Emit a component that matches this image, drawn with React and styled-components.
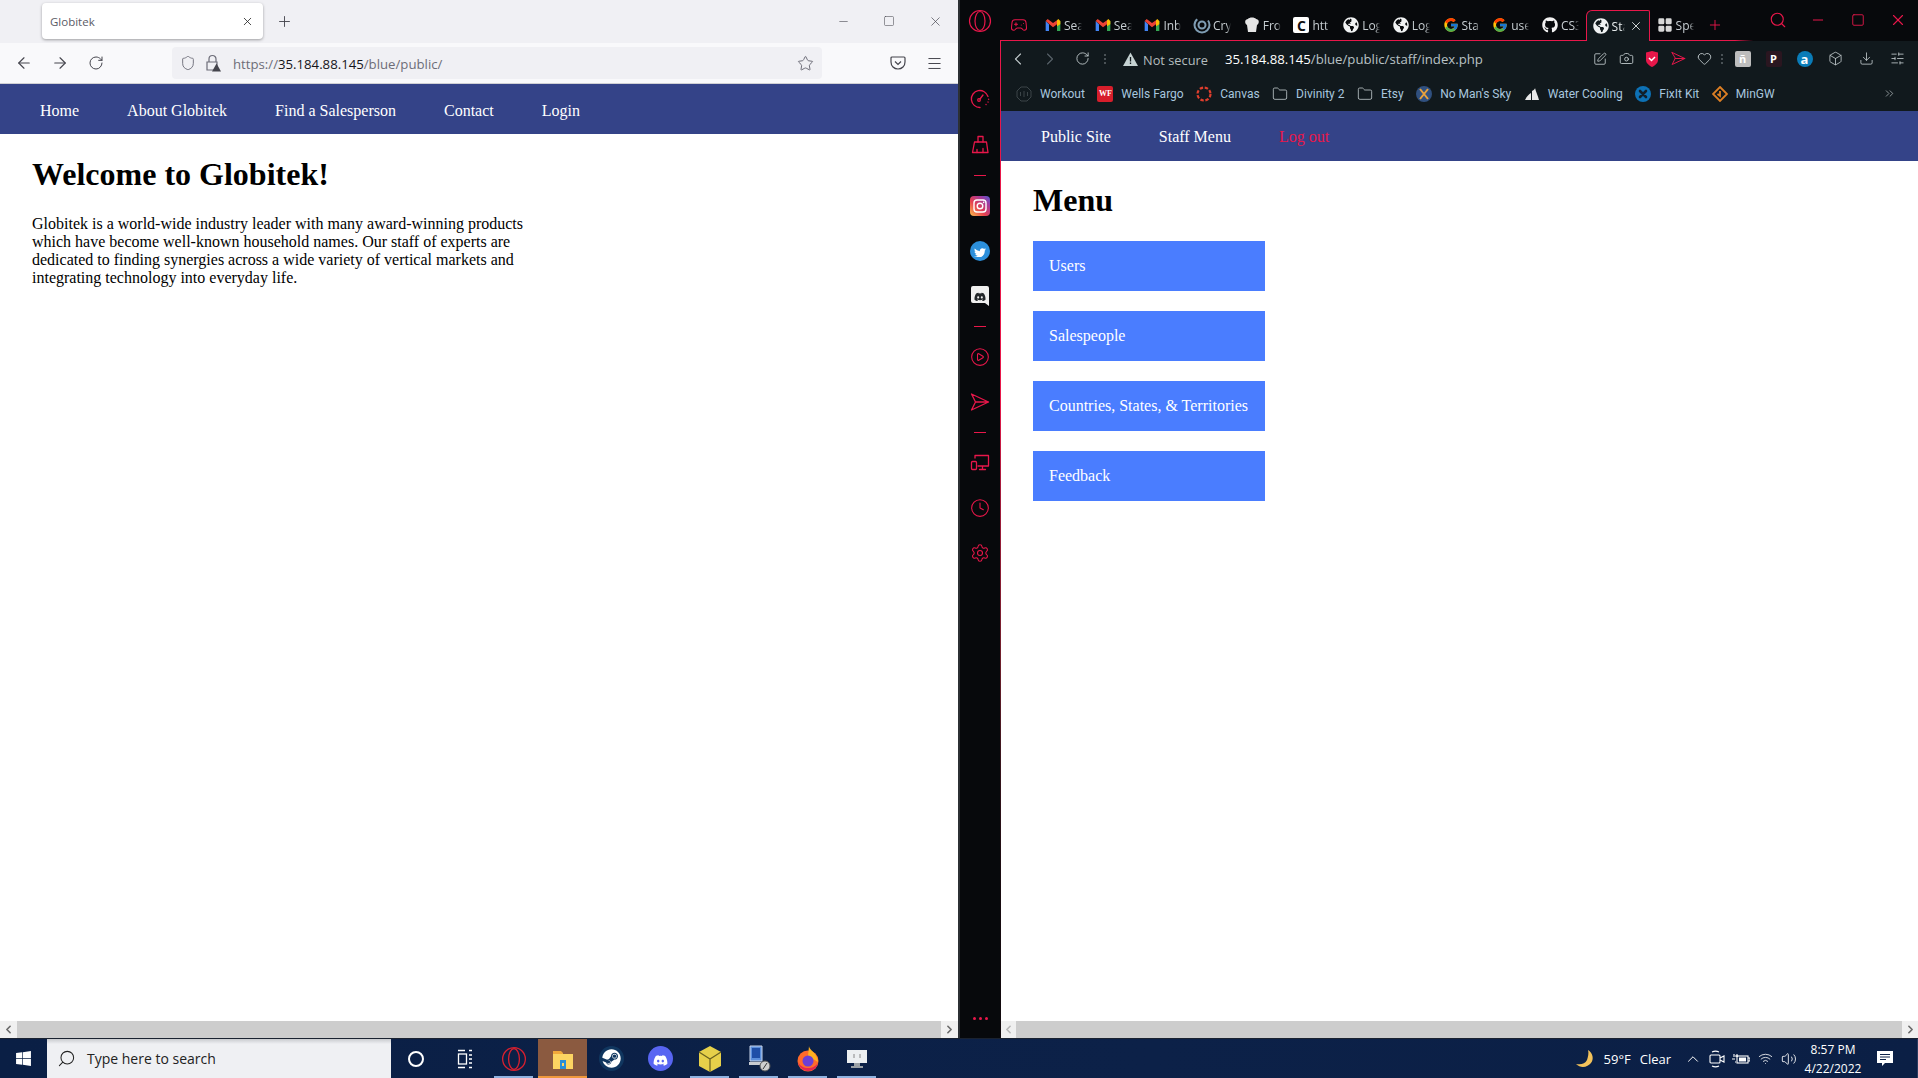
import React from "react";
import styled, { createGlobalStyle } from "styled-components";
import {
  ArrowLeft, ArrowRight, RotateCw, Shield, Star, Menu, X, Plus, Minus, Square, Search,
  CirclePlay, Clock, Settings, Gamepad2,
  ChevronLeft, ChevronRight, ChevronUp, ChevronsRight, Folder, SquarePen, Camera, Heart, Box,
  Download, SlidersHorizontal, Wifi, Volume2, LayoutGrid,
} from "lucide-react";
import { FaTwitter, FaDiscord, FaWindows, FaSteam, FaGithub, FaGlobeAmericas } from "react-icons/fa";
import { FcGoogle } from "react-icons/fc";

const crimson = "#e8174a";
const navBlue = "#344388";
const serif = `"Liberation Serif", "Times New Roman", serif`;
const sans = `"Open Sans", "Noto Sans", sans-serif`;
const uiSans = `Roboto, "Open Sans", sans-serif`;

const GlobalStyle = createGlobalStyle`
  html, body { margin: 0; height: 100%; overflow: hidden; background: #fff; }
  * { box-sizing: border-box; }
`;

const Screen = styled.div`
  height: 100vh;
  display: flex;
  flex-direction: column;
  font-family: ${serif};
`;
const Windows = styled.div`
  flex: 1;
  display: flex;
  min-height: 0;
`;

/* left window (firefox) */
const LeftWindow = styled.div`
  width: 958px;
  display: flex;
  flex-direction: column;
`;
const FoxTabs = styled.div`
  height: 43px;
  background: #f0f0f4;
  display: flex;
  padding: 3px 0 4px 42px;
  flex: none;
`;
const FoxTab = styled.div`
  width: 221px;
  background: #fff;
  border-radius: 4px;
  box-shadow: 0 1px 3px rgba(0, 0, 0, 0.35);
  display: flex;
  align-items: center;
  justify-content: space-between;
  padding: 0 9px 0 8px;
  font: 11.5px ${sans};
  color: #5b5b66;
`;
const Slot = styled.span`
  width: ${(p) => p.$w || 36}px;
  flex: none;
  display: flex;
  align-items: center;
  justify-content: center;
  color: ${(p) => p.$c || "inherit"};
`;
const WinControls = styled.div`
  margin-left: auto;
  display: flex;
  color: #45454d;
`;
const FoxToolbar = styled.div`
  height: 41px;
  flex: none;
  background: #f9f9fb;
  border-bottom: 1px solid #d0d0d4;
  display: flex;
  align-items: center;
  padding: 0 6px;
  color: #45454d;
`;
const FoxAddress = styled.div`
  width: 650px;
  height: 32px;
  margin: 0 58px;
  background: #f0f0f4;
  border-radius: 4px;
  display: flex;
  align-items: center;
  padding: 0 4px;
  font: 13.2px ${sans};
  color: #6d6d78;
  b { font-weight: 400; color: #15141a; }
`;
const FoxUrl = styled.span`
  flex: 1;
  padding: 2px 0 0 7px;
`;
const NavBar = styled.nav`
  height: 50px;
  flex: none;
  background: ${navBlue};
  display: flex;
  padding: ${(p) => p.$top || 0}px 16px 0;
`;
const NavLink = styled.a`
  padding: 2px 24px 0;
  display: flex;
  align-items: center;
  font-size: 16px;
  color: ${(p) => p.$c || "#fff"};
`;
const Page = styled.main`
  flex: 1;
  padding: ${(p) => p.$top || 0}px 32px 0;
  background: #fff;
  color: #000;
  min-height: 0;
`;
const Title = styled.h1`
  font-size: 32px;
  font-weight: 700;
  margin: 21.44px 0;
  line-height: 37px;
`;
const Intro = styled.p`
  width: 500px;
  margin: 0;
  font-size: 16px;
  line-height: 18px;
`;
const MenuList = styled.div`
  display: flex;
  flex-direction: column;
  gap: 20px;
`;
const MenuItem = styled.a`
  width: 232px;
  height: 50px;
  padding: 0 16px;
  display: flex;
  align-items: center;
  background: #4a7dff;
  color: #fff;
  font-size: 16px;
`;
const ScrollBar = styled.div`
  height: 17px;
  flex: none;
  display: flex;
  background: #cdcdcd;
`;
const ScrollButton = styled.span`
  width: ${(p) => p.$w || 17}px;
  display: flex;
  align-items: center;
  justify-content: center;
  background: ${(p) => p.$bg || "#f0f0f0"};
  color: ${(p) => p.$c || "#6a6a6a"};
  flex: none;
`;
const ScrollTrack = styled.span`
  flex: 1;
`;

/* right window (opera gx) */
const RightWindow = styled.div`
  flex: 1;
  display: flex;
  min-width: 0;
  background: #07090c;
  border-left: 2px solid #2c3034;
`;
const GxSidebar = styled.aside`
  width: 40px;
  flex: none;
  display: flex;
  flex-direction: column;
  align-items: center;
  color: ${crimson};
  padding-bottom: 18px;
`;
const GxLogo = styled.div`
  height: 76px;
  padding-top: 9px;
  flex: none;
`;
const SideSlot = styled.span`
  height: 45px;
  flex: none;
  display: flex;
  align-items: center;
  justify-content: center;
`;
const SideRule = styled.span`
  width: 12px;
  height: 1px;
  margin: ${(p) => p.$m || 7}px 0 7px;
  flex: none;
  background: ${crimson};
`;
const SideDots = styled.div`
  margin-top: auto;
  display: flex;
  gap: 3px;
  span { width: 3px; height: 3px; border-radius: 50%; background: ${crimson}; }
`;
const GxMain = styled.div`
  flex: 1;
  min-width: 0;
  display: flex;
  flex-direction: column;
`;
const GxTabs = styled.div`
  height: 41px;
  flex: none;
  display: flex;
  align-items: flex-end;
  border-bottom: 1px solid;
  border-image: linear-gradient(to right, ${crimson} 80%, transparent 82%) 1;
`;
const GameSlot = styled.span`
  width: 38px;
  height: 30px;
  margin-right: 7px;
  display: flex;
  align-items: center;
  justify-content: center;
  color: ${crimson};
  flex: none;
`;
const GxTab = styled.div`
  width: 49.7px;
  height: 30px;
  flex: none;
  display: flex;
  align-items: center;
  gap: 3px;
  color: #c7ced2;
  font: 12px ${sans};
`;
const GxActiveTab = styled.div`
  width: 64px;
  height: 31px;
  flex: none;
  margin: 0 7px -1px -6px;
  padding: 0 6px;
  display: flex;
  align-items: center;
  gap: 3px;
  position: relative;
  z-index: 1;
  background: #11191d;
  border: 1px solid ${crimson};
  border-bottom: 0;
  border-radius: 6px 2px 0 0;
  color: #e8eced;
  font: 12px ${sans};
`;
const TabText = styled.span`
  width: ${(p) => p.$w || 18}px;
  flex: none;
  overflow: hidden;
  white-space: nowrap;
  -webkit-mask-image: linear-gradient(to right, #000 75%, transparent);
  mask-image: linear-gradient(to right, #000 75%, transparent);
`;
const GxControls = styled.div`
  margin-left: auto;
  height: 40px;
  display: flex;
  color: ${crimson};
`;
const GxFrame = styled.div`
  flex: 1;
  min-height: 0;
  display: flex;
  flex-direction: column;
  border-left: 1px solid;
  border-image: linear-gradient(to bottom, ${crimson} 0, ${crimson} 36%, #a51c3c 45%, #70202c 62%, #3a161e 72%, #180b10 85%, #110a0d 100%) 1;
`;
const GxBar = styled.div`
  height: 35px;
  flex: none;
  background: #11191d;
  display: flex;
  align-items: center;
  color: #c5ced0;
`;
const ThinDots = styled.span`
  width: ${(p) => p.$w || 14}px;
  flex: none;
  display: flex;
  flex-direction: column;
  align-items: center;
  gap: 2px;
  i { width: 2px; height: 2px; background: #4a5256; }
`;
const NotSecure = styled.span`
  width: 87px;
  flex: none;
  padding: 3px 0 0 5px;
  font: 12.8px ${sans};
  color: #b4bdbf;
`;
const GxUrl = styled.span`
  padding-top: 1px;
  font: 13.2px ${sans};
  color: #b9c2c5;
  b { font-weight: 400; color: #fff; }
`;
const GxExtensions = styled.div`
  margin-left: auto;
  padding-right: 5px;
  display: flex;
  align-items: center;
`;
const ExtBadge = styled.span`
  width: 16px;
  height: 16px;
  flex: none;
  border-radius: ${(p) => p.$r || "2px"};
  background: ${(p) => p.$bg};
  color: ${(p) => p.$c || "#fff"};
  font: 700 ${(p) => p.$fs || 11}px ${(p) => p.$font || sans};
  display: flex;
  align-items: center;
  justify-content: center;
`;
const Bookmarks = styled(GxBar)`
  padding-left: 15px;
  gap: 12.5px;
`;
const Bookmark = styled.span`
  display: flex;
  align-items: center;
  gap: 8px;
  font: 12px ${uiSans};
  color: #a8c6df;
  white-space: nowrap;
`;
const BookmarkMore = styled.span`
  margin-left: auto;
  margin-right: 22px;
  color: #b9c2c5;
  display: flex;
`;

/* taskbar */
const Taskbar = styled.footer`
  height: 40px;
  flex: none;
  display: flex;
  background: linear-gradient(to right, #0a1f45, #0c2148 60%, #0b1f45);
  border-top: 1px solid #1a2230;
  color: #fff;
  font-family: ${sans};
`;
const StartButton = styled.span`
  width: 47px;
  flex: none;
  display: flex;
  align-items: center;
  justify-content: center;
`;
const SearchBox = styled.div`
  width: 344px;
  flex: none;
  background: linear-gradient(to bottom, #c9cbcf 0, #eff0f3 5px);
  display: flex;
  align-items: center;
  gap: 11px;
  padding-left: 10px;
  color: #222;
  font-size: 14px;
`;
const TaskSlot = styled.span`
  width: 49px;
  flex: none;
  position: relative;
  display: flex;
  align-items: center;
  justify-content: center;
  background: ${(p) => (p.$active ? "#8b5a40" : "transparent")};
  &::after {
    content: "";
    display: ${(p) => (p.$running || p.$active ? "block" : "none")};
    position: absolute;
    left: ${(p) => (p.$active ? 0 : 5)}px;
    right: ${(p) => (p.$active ? 0 : 5)}px;
    bottom: 0;
    height: 2px;
    background: ${(p) => (p.$active ? "#f0983c" : "#8fb2e0")};
  }
`;
const Tray = styled.div`
  margin-left: auto;
  padding-right: 12px;
  display: flex;
  align-items: center;
  font-size: 13px;
  border-right: 1px solid #2a3c60;
`;
const Weather = styled.span`
  display: flex;
  align-items: center;
  gap: 9px;
  margin-right: 10px;
`;
const ClockText = styled.div`
  width: 64px;
  flex: none;
  text-align: center;
  font-size: 12px;
  line-height: 19px;
`;

const menuItems = ["Users", "Salespeople", "Countries, States, & Territories", "Feedback"];
const publicLinks = ["Home", "About Globitek", "Find a Salesperson", "Contact", "Login"];

const Outline = ({ size = 20, sw = 1.3, children }) => (
  <svg width={size} height={size} viewBox="0 0 20 20" fill="none" stroke="currentColor" strokeWidth={sw} strokeLinecap="round" strokeLinejoin="round">
    {children}
  </svg>
);
const DialIcon = () => (
  <Outline>
    <path d="M18 7.500A8.500 8.500 0 1010 18.500" />
    <path d="M16 15.500l.1.1M18 13l.1.1M18.600 10.200l.1.1" />
    <circle cx="9" cy="11" r="1.300" />
    <path d="M10 10l3-4" />
  </Outline>
);
const BroomIcon = () => (
  <Outline>
    <path d="M8 2.500l0 5.500M13 2.500V8M8 2.500h5" />
    <path d="M4.500 8H16.500L18 18.500H2.500z" />
    <path d="M7 18.500v-3M13 18.500v-4" />
  </Outline>
);
const ArrowSendIcon = ({ size = 20 }) => (
  <Outline size={size}>
    <path d="M1.500 2L18.500 10 1.500 18 5.500 10zM5.500 10h13" />
  </Outline>
);
const DevicesIcon = () => (
  <Outline>
    <path d="M5 5V2.500h13.500V13H8M9.500 16.500h6M12.500 13v3.500" />
    <rect x="1.500" y="8.500" width="5" height="8" rx="1" />
  </Outline>
);
const GmailIcon = () => (
  <svg width="16" height="16" viewBox="0 0 24 24">
    <path d="M1 6v15h5V11z" fill="#4285f4" />
    <path d="M23 6v15h-5V11z" fill="#34a853" />
    <path d="M1 6l3-3 8 6 6-4v6l-6 4.500L1 6z" fill="#ea4335" />
    <path d="M18 5l2-2 3 3v5l-5 3z" fill="#fbbc04" />
  </svg>
);
const SwirlIcon = () => (
  <svg width="18" height="18" viewBox="0 0 18 18" fill="none" stroke="#7f9db3" style={{ flex: "none", margin: "0 -1px" }}>
    <circle cx="9" cy="9" r="7.500" strokeWidth="2" strokeDasharray="30 12" />
    <circle cx="9" cy="9" r="3.500" strokeWidth="2" />
  </svg>
);
const ChefIcon = () => (
  <svg width="16" height="16" viewBox="0 0 16 16" fill="#e5e5e5">
    <path d="M4 2c1-2 7-2 8 0 3 0 4 4 1 6l-1 7H4L3 8C0 6 1 2 4 2z" />
  </svg>
);
const Globe = ({ size = 16 }) => (
  <FaGlobeAmericas size={size} color="#f0f2f3" style={{ flex: "none" }} />
);
const OperaO = ({ size = 24, color = crimson }) => (
  <svg width={size} height={size} viewBox="0 0 24 24" fill="none" stroke={color} strokeWidth="1.200">
    <circle cx="12" cy="12" r="10.500" />
    <ellipse cx="12" cy="12" rx="5" ry="9.500" />
  </svg>
);
const InstaIcon = () => (
  <svg width="20" height="20" viewBox="0 0 20 20">
    <defs>
      <linearGradient id="ig" x1="0" y1="1" x2="1" y2="0">
        <stop offset="0" stopColor="#fdc04e" />
        <stop offset="0.4" stopColor="#e6404f" />
        <stop offset="0.75" stopColor="#a13a9e" />
        <stop offset="1" stopColor="#4f5bd5" />
      </linearGradient>
    </defs>
    <rect width="20" height="20" rx="4" fill="url(#ig)" />
    <rect x="4" y="4" width="12" height="12" rx="3" fill="none" stroke="#fff" strokeWidth="1.400" />
    <circle cx="10" cy="10" r="2.800" fill="none" stroke="#fff" strokeWidth="1.400" />
    <circle cx="13.600" cy="6.400" r="0.800" fill="#fff" />
  </svg>
);
const TwitterBadge = () => (
  <svg width="20" height="20" viewBox="0 0 20 20">
    <circle cx="10" cy="10" r="10" fill="#2c8fdb" />
    <foreignObject x="4" y="4" width="12" height="12"><FaTwitter size={12} color="#fff" /></foreignObject>
  </svg>
);
const DiscordBadge = () => (
  <svg width="18" height="20" viewBox="0 0 18 20">
    <path d="M2 0h14a2 2 0 012 2v18l-4-3H2a2 2 0 01-2-2V2a2 2 0 012-2z" fill="#f0f0f0" />
    <foreignObject x="3" y="3" width="12" height="12"><FaDiscord size={12} color="#23272a" /></foreignObject>
  </svg>
);
const OutlineWorkout = () => (
  <svg width="16" height="16" viewBox="0 0 16 16" fill="none" stroke="#3c4549">
    <path d="M5 1h6l4 4v6l-4 4H5l-4-4V5z" />
    <path d="M8 5v6M4.500 6v4M11.500 6v4" />
  </svg>
);
const CanvasIcon = () => (
  <svg width="16" height="16" viewBox="0 0 16 16" fill="none" stroke="#e03e2d" strokeWidth="2.200">
    <circle cx="8" cy="8" r="6.500" strokeDasharray="3.400 1.700" />
  </svg>
);
const NmsIcon = () => (
  <svg width="16" height="16" viewBox="0 0 16 16">
    <circle cx="8" cy="8" r="8" fill="#30507f" />
    <path d="M4 3l8 10M12 3L4 13" stroke="#e8a23c" strokeWidth="2" />
  </svg>
);
const SailsIcon = () => (
  <svg width="16" height="16" viewBox="0 0 16 16" fill="#e8e8e8">
    <path d="M1 14C3 10 5 8 7 7v7zM8 14V5c2-1 3-2 3-3 1 4 3 8 4 12z" />
  </svg>
);
const FixitIcon = () => (
  <svg width="16" height="16" viewBox="0 0 16 16">
    <circle cx="8" cy="8" r="8" fill="#0d71b5" />
    <path d="M5 5l6 6M11 5l-6 6" stroke="#10202c" strokeWidth="2.600" strokeLinecap="round" />
  </svg>
);
const MingwIcon = () => (
  <svg width="16" height="16" viewBox="0 0 16 16" fill="none" stroke="#dd7f24" strokeWidth="1.800">
    <path d="M8 1l7 7-7 7-7-7z" />
    <path d="M8 5v5l-2.500-2" />
  </svg>
);
const AegisIcon = () => (
  <svg width="14" height="16" viewBox="0 0 14 16">
    <path d="M1 1.500L7 0l6 1.500V9c0 3-3 5.500-6 7-3-1.500-6-4-6-7z" fill={crimson} />
    <path d="M4 7l2.500 2.500L10 6" stroke="#fff" strokeWidth="1.500" fill="none" />
  </svg>
);
const WarningIcon = () => (
  <svg width="15" height="14" viewBox="0 0 15 14">
    <path d="M7.500 0.500L15 14H0z" fill="#c5d2d2" />
    <path d="M7.500 5v4.500M7.500 10.500v1.500" stroke="#11191d" strokeWidth="1.300" />
  </svg>
);
const WarnLock = () => (
  <svg width="16" height="18" viewBox="0 0 16 18" fill="none" stroke="currentColor" strokeWidth="1.200">
    <path d="M4 8V5a3.500 3.500 0 017 0v3M2 8h10v8H2z" />
    <path d="M11.500 9.500L16 17.500H7z" fill="#45454d" stroke="none" />
  </svg>
);
const PocketIcon = () => (
  <svg width="16" height="16" viewBox="0 0 16 16" fill="none" stroke="currentColor" strokeWidth="1.200">
    <path d="M2 2h12a1 1 0 011 1v4c0 4-3 7-7 7s-7-3-7-7V3a1 1 0 011-1z" />
    <path d="M5 6.500l3 3 3-3" />
  </svg>
);
const ExplorerIcon = () => (
  <svg width="22" height="22" viewBox="0 0 22 22">
    <path d="M1 3h8l2 2v3H1z" fill="#f2a93b" />
    <path d="M1 6h20v15H1z" fill="#fcd462" />
    <path d="M8 12h6v9H8z" fill="#2a8fd8" />
    <path d="M10 15h2v3h-2z" fill="#fcd462" />
  </svg>
);
const DiscordRound = () => (
  <svg width="25" height="25" viewBox="0 0 25 25">
    <circle cx="12.500" cy="12.500" r="12.500" fill="#5865f2" />
    <foreignObject x="5" y="5" width="15" height="15"><FaDiscord size={15} color="#fff" /></foreignObject>
  </svg>
);
const SteamRound = () => (
  <svg width="25" height="25" viewBox="0 0 25 25">
    <circle cx="12.500" cy="12.500" r="12.500" fill="#10365f" />
    <foreignObject x="3" y="3" width="19" height="19"><FaSteam size={19} color="#fff" /></foreignObject>
  </svg>
);
const YellowCube = () => (
  <svg width="22" height="26" viewBox="0 0 22 26">
    <path d="M11 0l11 6v14l-11 6-11-6V6z" fill="#e6d04a" />
    <path d="M0 6l11 7 11-7M11 13v13" stroke="#6a6120" strokeWidth="1.200" fill="none" />
  </svg>
);
const VmIcon = () => (
  <svg width="24" height="28" viewBox="0 0 24 28">
    <path d="M3 1h12v15H3z" fill="#5b8fdc" stroke="#c9d5ea" />
    <path d="M5 3h8v10H5z" fill="#1f4fa8" />
    <path d="M2 17h15l2 3H2z" fill="#c8ccd2" />
    <circle cx="18" cy="21" r="5" fill="#cfcfcf" stroke="#555" />
    <path d="M16 24l4-6" stroke="#333" />
  </svg>
);
const FirefoxIcon = () => (
  <svg width="24" height="26" viewBox="0 0 24 26">
    <circle cx="12" cy="15" r="10.500" fill="#ff6a2a" />
    <path d="M13 0c0 3 4 5 6 8 3 4 3 8 3 8L12 10z" fill="#ffb01f" />
    <circle cx="12" cy="15" r="5.500" fill="#6b3fd4" />
    <path d="M2 16c1 6 6 9 10 9 5 0 9-3 10-8-3 4-6 5-10 5-4 0-8-2-10-6z" fill="#e22850" />
  </svg>
);
const MonitorIcon = () => (
  <svg width="22" height="22" viewBox="0 0 22 22">
    <path d="M1 2h20v13H1z" fill="#eceff1" />
    <path d="M8 6v4M14 6v4" stroke="#888" />
    <path d="M8 15h6v3h3v2H5v-2h3z" fill="#9aa0a5" />
  </svg>
);
const TaskViewIcon = () => (
  <svg width="16" height="20" viewBox="0 0 16 20" fill="none" stroke="#fff" strokeWidth="1.300">
    <path d="M1 1.500h7M12 1.500h3M1 18.500h7M12 18.500h3" />
    <rect x="1.500" y="5" width="8" height="10" />
    <path d="M12 6h3M12 10h3M12 14h3" />
  </svg>
);
const CameraTray = () => (
  <svg width="17" height="18" viewBox="0 0 17 18" fill="none" stroke="#fff" strokeWidth="1.100">
    <rect x="1" y="5" width="10" height="8" rx="1" />
    <path d="M11 8l4-2v6l-4-2M3 2c2-1 5-1 7 0M3 16c2 1 5 1 7 0" />
  </svg>
);
const BatteryTray = () => (
  <svg width="18" height="14" viewBox="0 0 18 14" fill="none" stroke="#fff" strokeWidth="1.100">
    <rect x="5" y="4" width="11" height="7" />
    <rect x="7" y="5.500" width="7" height="4" fill="#fff" stroke="none" />
    <path d="M0 7h3M3 4h3M3 10h1M16 6h2v3h-2" />
    <path d="M2 2v3M5 2v3" />
  </svg>
);
const MoonIcon = () => (
  <svg width="20" height="20" viewBox="0 0 20 20">
    <path d="M13 1c5 3 6 9 3 13s-10 6-15 1c5 1 9 0 11-4 1-3 2-7 1-10z" fill="#f3c25b" />
  </svg>
);
const NotifyIcon = () => (
  <svg width="18" height="18" viewBox="0 0 18 18">
    <path d="M1 1h16v12H9l-3 3v-3H1z" fill="#fff" />
    <path d="M4 4.500h10M4 7h10M4 9.500h6" stroke="#0c2148" />
  </svg>
);

const gxTabs = [
  [<GmailIcon key="i" />, "Sea"],
  [<GmailIcon key="i" />, "Sea"],
  [<GmailIcon key="i" />, "Inb"],
  [<SwirlIcon key="i" />, "Cry"],
  [<ChefIcon key="i" />, "Fro"],
  [<ExtBadge key="i" $bg="#fff" $c="#111" $fs={14} $font={sans}>C</ExtBadge>, "htt"],
  [<Globe key="i" />, "Log"],
  [<Globe key="i" />, "Log"],
  [<FcGoogle key="i" size={16} />, "Sta"],
  [<FcGoogle key="i" size={16} />, "use"],
  [<FaGithub key="i" size={16} color="#f2f2f2" />, "CS3"],
];

const bookmarks = [
  [<OutlineWorkout key="i" />, "Workout"],
  [<ExtBadge key="i" $bg="#d71e2b" $fs={8} $font={serif}>WF</ExtBadge>, "Wells Fargo"],
  [<CanvasIcon key="i" />, "Canvas"],
  [<Folder key="i" size={16} strokeWidth={1.2} color="#c5ced0" />, "Divinity 2"],
  [<Folder key="i" size={16} strokeWidth={1.2} color="#c5ced0" />, "Etsy"],
  [<NmsIcon key="i" />, "No Man's Sky"],
  [<SailsIcon key="i" />, "Water Cooling"],
  [<FixitIcon key="i" />, "FixIt Kit"],
  [<MingwIcon key="i" />, "MinGW"],
];

export default function App() {
  return (
    <Screen>
      <GlobalStyle />
      <Windows>
        <LeftWindow>
          <FoxTabs>
            <FoxTab>
              Globitek
              <X size={13} color="#222" strokeWidth={1.5} />
            </FoxTab>
            <Slot $w={42} $c="#45454d"><Plus size={17} strokeWidth={1.3} /></Slot>
            <WinControls>
              <Slot $w={46}><Minus size={13} strokeWidth={1.1} /></Slot>
              <Slot $w={46}><Square size={12} strokeWidth={1.1} /></Slot>
              <Slot $w={46}><X size={15} strokeWidth={1.1} /></Slot>
            </WinControls>
          </FoxTabs>
          <FoxToolbar>
            <Slot><ArrowLeft size={18} strokeWidth={1.5} /></Slot>
            <Slot><ArrowRight size={18} strokeWidth={1.5} /></Slot>
            <Slot><RotateCw size={16} strokeWidth={1.5} /></Slot>
            <FoxAddress>
              <Slot $w={24}><Shield size={16} strokeWidth={1.4} /></Slot>
              <Slot $w={26}><WarnLock /></Slot>
              <FoxUrl>https://<b>35.184.88.145</b>/blue/public/</FoxUrl>
              <Slot $w={26}><Star size={17} strokeWidth={1.4} /></Slot>
            </FoxAddress>
            <Slot><PocketIcon /></Slot>
            <Slot><Menu size={17} strokeWidth={1.4} /></Slot>
          </FoxToolbar>
          <NavBar $top={2}>
            {publicLinks.map((link) => (
              <NavLink key={link}>{link}</NavLink>
            ))}
          </NavBar>
          <Page $top={1}>
            <Title>Welcome to Globitek!</Title>
            <Intro>
              Globitek is a world-wide industry leader with many award-winning products which have become
              well-known household names. Our staff of experts are dedicated to finding synergies across a
              wide variety of vertical markets and integrating technology into everyday life.
            </Intro>
          </Page>
          <ScrollBar>
            <ScrollButton><ChevronLeft size={13} strokeWidth={3} /></ScrollButton>
            <ScrollTrack />
            <ScrollButton><ChevronRight size={13} strokeWidth={3} /></ScrollButton>
          </ScrollBar>
        </LeftWindow>

        <RightWindow>
          <GxSidebar>
            <GxLogo><OperaO /></GxLogo>
            <SideSlot><DialIcon /></SideSlot>
            <SideSlot><BroomIcon /></SideSlot>
            <SideRule $m={9} />
            <SideSlot><InstaIcon /></SideSlot>
            <SideSlot><TwitterBadge /></SideSlot>
            <SideSlot><DiscordBadge /></SideSlot>
            <SideRule $m={8} />
            <SideSlot><CirclePlay size={20} strokeWidth={1.3} /></SideSlot>
            <SideSlot><ArrowSendIcon /></SideSlot>
            <SideRule $m={8} />
            <SideSlot><DevicesIcon /></SideSlot>
            <SideSlot><Clock size={20} strokeWidth={1.3} /></SideSlot>
            <SideSlot><Settings size={20} strokeWidth={1.3} /></SideSlot>
            <SideDots><span /><span /><span /></SideDots>
          </GxSidebar>

          <GxMain>
            <GxTabs>
              <GameSlot><Gamepad2 size={18} strokeWidth={1.4} /></GameSlot>
              {gxTabs.map(([icon, label], i) => (
                <GxTab key={i}>
                  {icon}
                  <TabText>{label}</TabText>
                </GxTab>
              ))}
              <GxActiveTab>
                <Globe />
                <TabText $w={13}>Sta</TabText>
                <X size={14} strokeWidth={1.5} style={{ marginLeft: 1, flex: "none" }} />
              </GxActiveTab>
              <GxTab>
                <LayoutGrid size={16} fill="#d8d8d8" color="#d8d8d8" />
                <TabText>Spe</TabText>
              </GxTab>
              <Slot $w={18} $c={crimson} style={{ height: 30 }}><Plus size={16} strokeWidth={1.4} /></Slot>
              <GxControls>
                <Slot $w={40}><Search size={18} strokeWidth={1.5} /></Slot>
                <Slot $w={40}><Minus size={16} strokeWidth={1.5} /></Slot>
                <Slot $w={40}><Square size={14} strokeWidth={1.5} /></Slot>
                <Slot $w={40}><X size={18} strokeWidth={1.5} /></Slot>
              </GxControls>
            </GxTabs>
            <GxFrame>
              <GxBar>
                <Slot $w={33}><ChevronLeft size={20} strokeWidth={1.3} /></Slot>
                <Slot $w={32} $c="#59636a"><ChevronRight size={20} strokeWidth={1.3} /></Slot>
                <Slot $w={32}><RotateCw size={15} strokeWidth={1.4} /></Slot>
                <ThinDots><i /><i /><i /></ThinDots>
                <Slot $w={16} style={{ marginLeft: 10 }}><WarningIcon /></Slot>
                <NotSecure>Not secure</NotSecure>
                <GxUrl><b>35.184.88.145</b>/blue/public/staff/index.php</GxUrl>
                <GxExtensions>
                  <Slot $w={26}><SquarePen size={14} strokeWidth={1.4} /></Slot>
                  <Slot $w={26}><Camera size={15} strokeWidth={1.4} /></Slot>
                  <Slot $w={26}><AegisIcon /></Slot>
                  <Slot $w={26} $c={crimson}><ArrowSendIcon size={15} /></Slot>
                  <Slot $w={26}><Heart size={15} strokeWidth={1.4} /></Slot>
                  <ThinDots $w={10}><i /><i /><i /></ThinDots>
                  <Slot $w={31}><ExtBadge $bg="#bdbdbd">ñ</ExtBadge></Slot>
                  <Slot $w={31}><ExtBadge $bg="#2a1620">P</ExtBadge></Slot>
                  <Slot $w={31}><ExtBadge $bg="#0a7cb8" $r="50%" $fs={13}>a</ExtBadge></Slot>
                  <Slot $w={31}><Box size={15} strokeWidth={1.3} /></Slot>
                  <Slot $w={31}><Download size={15} strokeWidth={1.3} /></Slot>
                  <Slot $w={31}><SlidersHorizontal size={15} strokeWidth={1.3} /></Slot>
                </GxExtensions>
              </GxBar>
              <Bookmarks>
                {bookmarks.map(([icon, label]) => (
                  <Bookmark key={label}>
                    {icon}
                    {label}
                  </Bookmark>
                ))}
                <BookmarkMore><ChevronsRight size={13} strokeWidth={1.3} /></BookmarkMore>
              </Bookmarks>
              <NavBar>
                <NavLink>Public Site</NavLink>
                <NavLink>Staff Menu</NavLink>
                <NavLink $c={crimson}>Log out</NavLink>
              </NavBar>
              <Page>
                <Title>Menu</Title>
                <MenuList>
                  {menuItems.map((item) => (
                    <MenuItem key={item}>{item}</MenuItem>
                  ))}
                </MenuList>
              </Page>
              <ScrollBar>
                <ScrollButton $w={15} $c="#b8b8b8"><ChevronLeft size={13} strokeWidth={3} /></ScrollButton>
                <ScrollTrack />
                <ScrollButton $w={16}><ChevronRight size={13} strokeWidth={3} /></ScrollButton>
              </ScrollBar>
            </GxFrame>
          </GxMain>
        </RightWindow>
      </Windows>

      <Taskbar>
        <StartButton><FaWindows size={17} /></StartButton>
        <SearchBox>
          <Search size={19} strokeWidth={1.3} style={{ transform: "scaleX(-1)" }} />
          Type here to search
        </SearchBox>
        <TaskSlot><svg width="18" height="18" viewBox="0 0 18 18" fill="none" stroke="#fff" strokeWidth="2"><circle cx="9" cy="9" r="7" /></svg></TaskSlot>
        <TaskSlot><TaskViewIcon /></TaskSlot>
        <TaskSlot $running><OperaO size={26} color="#d8202f" /></TaskSlot>
        <TaskSlot $active><ExplorerIcon /></TaskSlot>
        <TaskSlot><SteamRound /></TaskSlot>
        <TaskSlot><DiscordRound /></TaskSlot>
        <TaskSlot $running><YellowCube /></TaskSlot>
        <TaskSlot $running><VmIcon /></TaskSlot>
        <TaskSlot $running><FirefoxIcon /></TaskSlot>
        <TaskSlot $running><MonitorIcon /></TaskSlot>
        <Tray>
          <Weather>
            <MoonIcon />
            <span>59°F</span>
            <span>Clear</span>
          </Weather>
          <Slot $w={24}><ChevronUp size={18} strokeWidth={1.3} /></Slot>
          <Slot $w={24}><CameraTray /></Slot>
          <Slot $w={24}><BatteryTray /></Slot>
          <Slot $w={24}><Wifi size={15} strokeWidth={1.3} /></Slot>
          <Slot $w={24}><Volume2 size={16} strokeWidth={1.3} /></Slot>
          <ClockText>8:57 PM<br />4/22/2022</ClockText>
          <Slot $w={40}><NotifyIcon /></Slot>
        </Tray>
      </Taskbar>
    </Screen>
  );
}
